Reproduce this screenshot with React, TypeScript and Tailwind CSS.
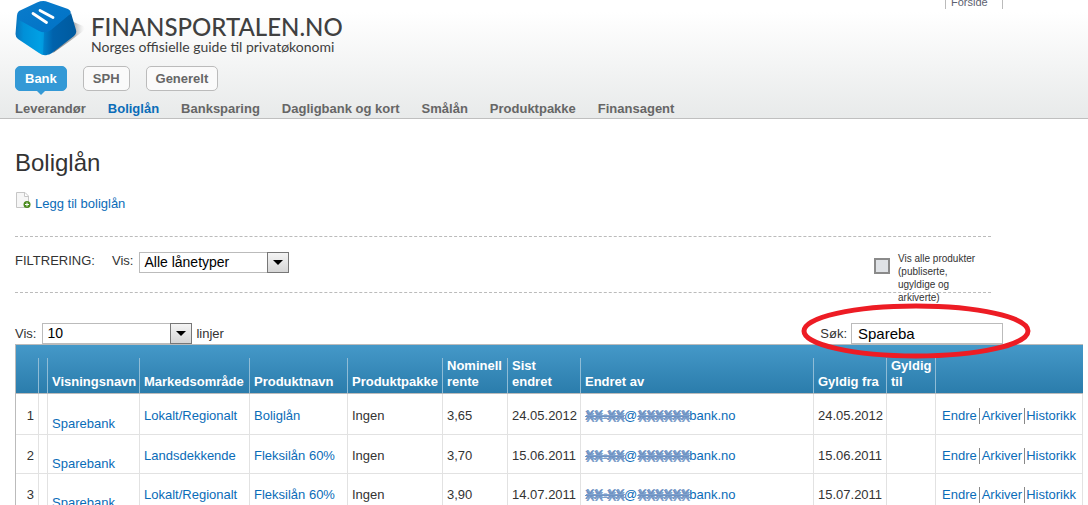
const tabs = ['Bank', 'SPH', 'Generelt'];
const sections = ['Leverandør', 'Boliglån', 'Banksparing', 'Dagligbank og kort', 'Smålån', 'Produktpakke', 'Finansagent'];
const headings = ['', '', 'Visningsnavn', 'Markedsområde', 'Produktnavn', 'Produktpakke', 'Nominell\nrente', 'Sist\nendret', 'Endret av', 'Gyldig fra', 'Gyldig\ntil', ''];
const rows = [
  { nr: 1, name: 'Sparebank', area: 'Lokalt/Regionalt', product: 'Boliglån', pack: 'Ingen', rate: '3,65', changed: '24.05.2012', from: '24.05.2012' },
  { nr: 2, name: 'Sparebank', area: 'Landsdekkende', product: 'Fleksilån 60%', pack: 'Ingen', rate: '3,70', changed: '15.06.2011', from: '15.06.2011' },
  { nr: 3, name: 'Sparebank', area: 'Lokalt/Regionalt', product: 'Fleksilån 60%', pack: 'Ingen', rate: '3,90', changed: '14.07.2011', from: '15.07.2011' },
];

function Logo() {
  return (
    <svg className="h-[56px] w-[72px] shrink-0" viewBox="0 0 72 56" aria-hidden="true">
      <defs>
        <linearGradient id="top" x1="0" y1="0" x2="1" y2="1">
          <stop offset="0" stopColor="#0a7ccb" />
          <stop offset="1" stopColor="#0072c6" />
        </linearGradient>
        <linearGradient id="left" x1="0" y1="0" x2="1" y2="0">
          <stop offset="0" stopColor="#0a74bc" />
          <stop offset=".25" stopColor="#0090d8" />
          <stop offset=".75" stopColor="#00a0e4" />
          <stop offset="1" stopColor="#0090d8" />
        </linearGradient>
        <linearGradient id="right" x1="0" y1="0" x2="1" y2="0">
          <stop offset="0" stopColor="#0084cf" />
          <stop offset=".3" stopColor="#0062ac" />
          <stop offset="1" stopColor="#005a9e" />
        </linearGradient>
        <linearGradient id="shade" x1="0" y1="0" x2="1" y2="0">
          <stop offset="0" stopColor="#777" />
          <stop offset=".7" stopColor="#aaa" stopOpacity=".8" />
          <stop offset="1" stopColor="#ddd" stopOpacity="0" />
        </linearGradient>
      </defs>
      <path d="M54 20 L68 26 Q72 28 67 32 L55 41 L38 53 Z" fill="url(#shade)" />
      <path d="M2 15 L0.500 34 Q0.500 37 3 39 L24 53 Q28 56 32 55 L33 30 L12 18 Z" fill="url(#left)" />
      <path d="M56 13 L61 30 Q62 33 59 36 L37 53 Q33 56 28 54.500 L29 32 Z" fill="url(#right)" />
      <path d="M4 11 L22 2.500 Q28 0 33 2 L53 9 Q58 12 54 15 L36 30 Q30 34 24 31 L4 20 Q0 15 4 11 Z" fill="url(#top)" />
      <path d="M18 13.500 L31.500 22.500 M25 10.500 L38 17.500" stroke="#fff" strokeWidth="2.800" strokeLinecap="round" />
    </svg>
  );
}

function AddPageIcon() {
  return (
    <svg className="h-[17px] w-[16px]" viewBox="0 0 16 17" aria-hidden="true">
      <path d="M1.500 .5h8.500l3.500 3.500v11.500h-12z" fill="#f6f6f6" stroke="#c6c6c6" />
      <path d="M9.500 1v3.500h3.500" fill="#fff" stroke="#c6c6c6" />
      <circle cx="12" cy="12.500" r="3.500" fill="#4a8a1c" />
      <path d="M10 12.500h4M12 10.500v4" stroke="#fff" />
    </svg>
  );
}

function Dropdown({ id, options }: { id: string; options: string[] }) {
  return (
    <span className="relative inline-block h-[21px] w-[150px]">
      <select id={id} className="h-full w-full appearance-none border border-[#bbb] bg-white pl-1 pr-6 text-sm leading-[19px] text-black">
        {options.map((o) => <option key={o}>{o}</option>)}
      </select>
      <span className="pointer-events-none absolute right-0 top-0 flex h-full w-[22px] items-center justify-center border border-[#777] bg-gradient-to-b from-[#f4f4f4] to-[#d6d6d6]">
        <span className="border-x-[5px] border-t-[5px] border-x-transparent border-t-black" />
      </span>
    </span>
  );
}

function MaskedAddress() {
  const mask = 'font-bold text-[#6e93c4] line-through decoration-1 [text-shadow:1px_2px_#7fa0cb,1px_-1px_#7fa0cb]';
  return (
    <a href="#" className="flex whitespace-nowrap">
      <span className={mask}>XX-XX</span>@<span className={mask}>XXXXXX</span>bank.no
    </a>
  );
}

export default function App() {
  const cell = 'border-b border-r border-[#e2e2e2] px-1 pb-0 pt-[3px]';
  return (
    <div className="h-screen overflow-hidden bg-white font-['Liberation_Sans',Arial,sans-serif] text-[13px] leading-4 text-[#333]">
      <header className="border-b border-[#bfbfbf] bg-gradient-to-b from-white from-10% to-[#e8eaea] px-[15px]">
        <div className="flex h-[66px] items-start justify-between">
          <a href="#" className="flex text-[#404040]">
            <Logo />
            <span className="ml-1 pt-[15px] font-[Lato,sans-serif]">
              <span className="block text-2xl font-medium leading-6">FINANSPORTALEN.NO</span>
              <span className="block text-sm leading-4">Norges offisielle guide til privatøkonomi</span>
            </span>
          </a>
          <a href="#" className="-mt-1 mr-[70px] h-[13px] w-[58px] border-x border-[#bbb] pl-[5px] text-[11px] leading-3 text-[#5c5f70]">Forside</a>
        </div>
        <nav className="flex gap-4 font-bold">
          {tabs.map((t, i) => (
            <button key={t} className={i === 0
              ? 'relative h-[25px] rounded-[5px] border border-[#3399d6] bg-[#3399d6] px-[9px] text-white'
              : 'h-[25px] rounded-[5px] border border-[#bbb] bg-[#fafafa] px-[9px] text-[#666]'}>
              {t}
              {i === 0 && <span className="absolute left-1/2 top-full -ml-[5px] border-x-[5px] border-t-[5px] border-x-transparent border-t-[#3399d6]" />}
            </button>
          ))}
        </nav>
        <nav className="flex gap-[22px] pb-px pt-[10px] font-bold text-[#666]">
          {sections.map((s, i) => <a key={s} href="#" className={i === 1 ? 'text-[#0a6cb8]' : ''}>{s}</a>)}
        </nav>
      </header>

      <main className="pl-[15px] pr-[5px] pt-[30px]">
        <h1 className="text-2xl leading-7">Boliglån</h1>
        <a href="#" className="mt-[15px] flex h-[20px] items-start gap-1 text-[#0a6cb8]">
          <AddPageIcon />
          <span className="pt-1">Legg til boliglån</span>
        </a>

        <section className="mr-[92px] mt-[24px] flex h-[57px] items-start border-y border-dashed border-[#bbb] pt-[15px]">
          <span className="w-[97px] pt-px">FILTRERING:</span>
          <label htmlFor="type" className="mr-[6px] pt-px">Vis:</label>
          <Dropdown id="type" options={['Alle lånetyper', 'Fastrente', 'Flytende']} />
          <input id="all" type="checkbox" className="ml-auto mt-[6px] size-4 shrink-0 appearance-none border-2 border-double border-[#8a8a8a] bg-[#dfe2e6]" />
          <label htmlFor="all" className="ml-2 w-[93px] pr-2 text-[10px] leading-[13px]">Vis alle produkter (publiserte, <br />ugyldige og <br />arkiverte)</label>
        </section>

        <section className="mr-[80px] mt-[30px] flex h-[21px] items-center justify-between">
          <div className="flex items-center">
            <label htmlFor="count" className="mr-[6px]">Vis:</label>
            <Dropdown id="count" options={['10', '25', '50']} />
            <span className="ml-1">linjer</span>
          </div>
          <div className="relative flex items-center">
            <label htmlFor="search" className="mr-1">Søk:</label>
            <input id="search" defaultValue="Spareba" className="h-[21px] w-[152px] border border-[#bbb] bg-white px-[6px] text-[15px] text-black" />
            <svg className="pointer-events-none absolute -left-5 -top-5 h-[56px] w-[232px]" viewBox="0 0 232 56" aria-hidden="true">
              <ellipse cx="116" cy="28" rx="112" ry="25" fill="none" stroke="#ed1c24" strokeWidth="5" />
            </svg>
          </div>
        </section>

        <table className="w-full table-fixed border-separate border-spacing-0 border-l border-[#bbb]">
          <colgroup>
            <col className="w-[23px]" /><col className="w-[9px]" /><col className="w-[92px]" /><col className="w-[110px]" />
            <col className="w-[98px]" /><col className="w-[95px]" /><col className="w-[65px]" /><col className="w-[73px]" />
            <col /><col className="w-[73px]" /><col className="w-[49px]" /><col className="w-[147px]" />
          </colgroup>
          <thead className="bg-gradient-to-b from-[#4599c9] to-[#2a7cab] text-white">
            <tr>
              {headings.map((h, i) => (
                <th key={i} className="h-[50px] border-y border-[#bbb] p-0 text-left align-bottom">
                  <div className={i === headings.length - 1 ? 'h-[35px]' : 'flex h-[35px] items-end whitespace-pre-line border-r border-[#8fbcd6] pb-[3px] pl-1'}>{h}</div>
                </th>
              ))}
            </tr>
          </thead>
          <tbody className="text-[#0a6cb8]">
            {rows.map((r) => (
              <tr key={r.nr} className="h-[39px] first:h-[41px]">
                <td className={`${cell} text-right text-[#333]`}>{r.nr}</td>
                <td className={cell} />
                <td className={cell}><a href="#" className="block pt-4">{r.name}</a></td>
                <td className={cell}><a href="#">{r.area}</a></td>
                <td className={cell}><a href="#">{r.product}</a></td>
                <td className={`${cell} text-[#333]`}>{r.pack}</td>
                <td className={`${cell} text-[#333]`}>{r.rate}</td>
                <td className={`${cell} text-[#333]`}>{r.changed}</td>
                <td className={cell}><MaskedAddress /></td>
                <td className={`${cell} text-[#333]`}>{r.from}</td>
                <td className={cell} />
                <td className={cell}>
                  <span className="flex justify-center">
                    <a href="#" className="border-r border-[#888] pr-[2px]">Endre</a>
                    <a href="#" className="border-r border-[#888] px-[2px]">Arkiver</a>
                    <a href="#" className="pl-px">Historikk</a>
                  </span>
                </td>
              </tr>
            ))}
          </tbody>
        </table>
      </main>
    </div>
  );
}
